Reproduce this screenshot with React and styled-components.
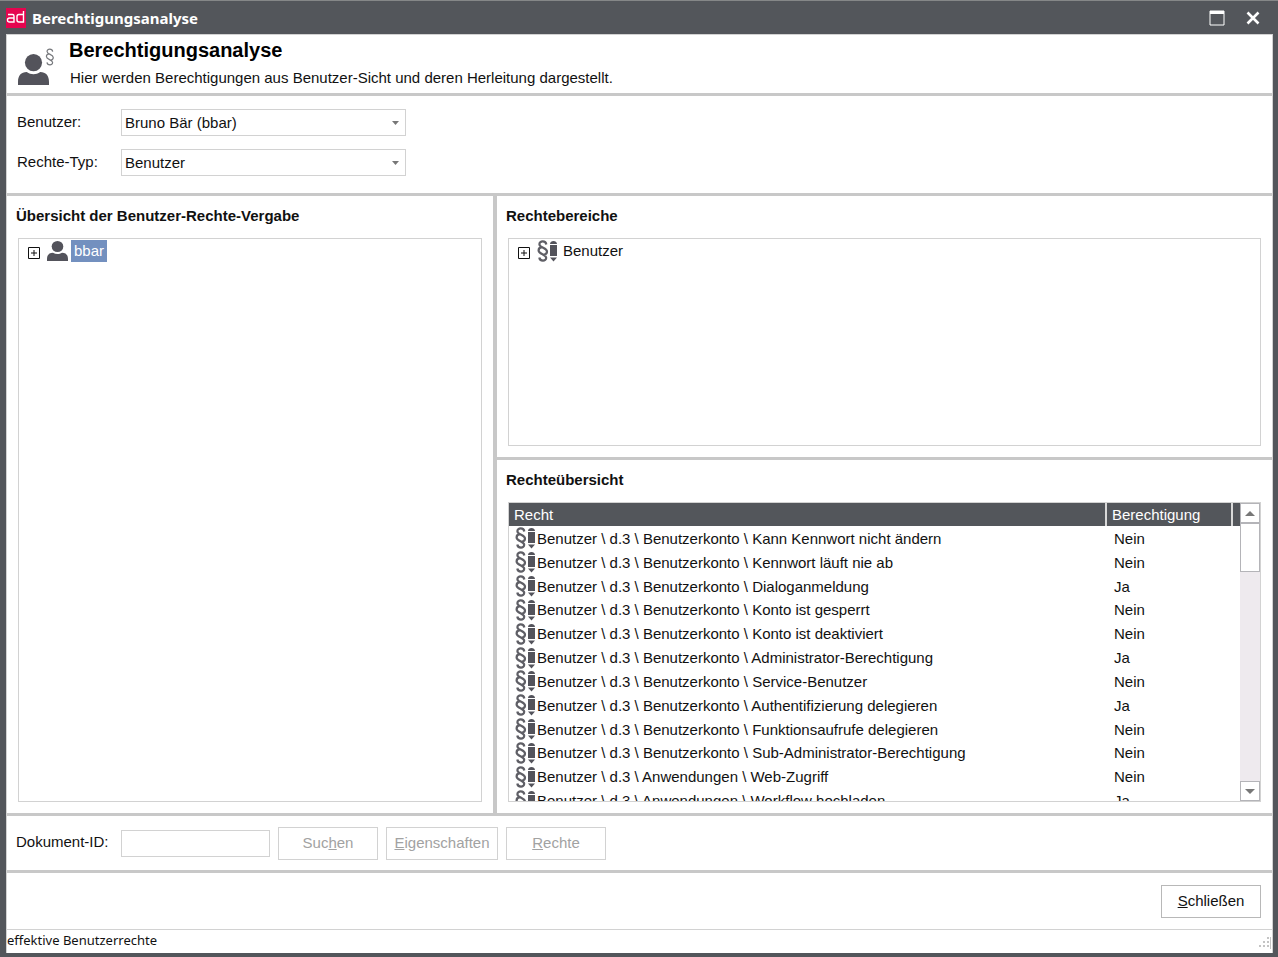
import React from 'react';
import styled, { createGlobalStyle } from 'styled-components';

const frame = '#53565b';
const line = '#c8c8c8';
const boxLine = '#d2d2d2';

const GlobalStyle = createGlobalStyle`
  *, *::before, *::after { box-sizing: border-box; }
  body { margin: 0; background: ${frame}; }
  body, button, input, select, table {
    font-family: "Liberation Sans", Arial, sans-serif;
    font-size: 15px;
    color: #111;
  }
`;

const Window = styled.div`
  display: flex;
  flex-direction: column;
  height: 100vh;
  min-height: 640px;
  padding: 0 5px 4px 6px;
  background: ${frame};
  border-top: 1px solid #858788;
`;

const TitleBar = styled.header`
  display: flex;
  align-items: center;
  flex: none;
  height: 33px;
  padding-right: 8px;
`;

const AppLogo = styled.svg`
  width: 20px;
  height: 20px;
`;

const WindowTitle = styled.div`
  flex: 1;
  padding-left: 6px;
  font-family: "Noto Sans", "Open Sans", sans-serif;
  font-size: 15px;
  font-weight: 700;
  color: #fff;
`;

const WindowButton = styled.button`
  display: flex;
  align-items: center;
  justify-content: center;
  width: 24px;
  height: 24px;
  margin-left: 12px;
  padding: 0;
  border: 0;
  background: none;
`;

const Body = styled.main`
  display: flex;
  flex-direction: column;
  flex: 1;
  min-height: 0;
  background: #fff;
  border: 1px solid ${boxLine};
  border-bottom: 0;
`;

const Intro = styled.section`
  display: flex;
  flex: none;
  height: 61px;
  border-bottom: 3px solid ${line};
`;

const IntroIcon = styled.svg`
  width: 40px;
  height: 42px;
  margin: 9px 11px 0 11px;
`;

const Heading = styled.h1`
  margin: 0;
  font-size: 20px;
  line-height: 30px;
  color: #000;
`;

const Description = styled.p`
  margin: 0;
  padding-left: 1px;
  line-height: 26px;
`;

const Filters = styled.form`
  display: grid;
  grid-template-columns: 104px 285px;
  grid-auto-rows: 27px;
  row-gap: 13px;
  flex: none;
  height: 100px;
  padding: 13px 0 0 10px;
  border-bottom: 3px solid ${line};
`;

const Label = styled.label`
  line-height: 25px;
  white-space: nowrap;
`;

const SelectWrap = styled.div`
  position: relative;
  display: flex;
`;

const Select = styled.select`
  width: 100%;
  appearance: none;
  padding: 0 20px 0 3px;
  border: 1px solid ${boxLine};
  border-radius: 0;
  background: #fff;
`;

const SelectArrow = styled.svg`
  position: absolute;
  top: 12px;
  right: 7px;
  width: 7px;
  height: 4px;
  pointer-events: none;
`;

const Columns = styled.div`
  display: grid;
  grid-template-columns: minmax(0, 486fr) minmax(0, 779fr);
  flex: 1;
  min-height: 0;
`;

const RightColumn = styled.div`
  display: grid;
  grid-template-rows: minmax(0, 264fr) minmax(0, 353fr);
  min-height: 0;
  border-left: 4px solid ${line};
`;

const Panel = styled.section`
  display: flex;
  flex-direction: column;
  min-height: 0;
  padding: 0 11px 11px 9px;
  border-bottom: ${(p) => (p.$divided ? `3px solid ${line}` : '0')};
`;

const PanelTitle = styled.h2`
  flex: none;
  margin: 0 0 3px;
  font-size: 15px;
  line-height: 39px;
  white-space: nowrap;
`;

const Well = styled.div`
  display: flex;
  flex: 1;
  min-height: 0;
  margin-left: 2px;
  border: 1px solid ${boxLine};
  overflow: hidden;
`;

const TreeItem = styled.div`
  display: flex;
  align-items: center;
  height: 23px;
  padding-left: 9px;
`;

const Expander = styled.button`
  width: 12px;
  height: 12px;
  margin: 4px 7px 0 0;
  padding: 0;
  border: 0;
  background: none;

  svg { display: block; }
`;

const NodeLabel = styled.span`
  margin-left: 3px;
  padding: 0 3px;
  line-height: 22px;
  color: ${(p) => (p.$selected ? '#fff' : '#111')};
  background: ${(p) => (p.$selected ? '#7390bf' : 'transparent')};
`;

const TableArea = styled.div`
  flex: 1;
  min-width: 0;
  overflow: hidden;
`;

const Table = styled.table`
  width: 100%;
  height: 309px;
  table-layout: fixed;
  border-collapse: separate;
  border-spacing: 0;

  td { padding: 1px 0 0; }
`;

const HeadCell = styled.th`
  width: ${(p) => p.$width || 'auto'};
  height: 23px;
  padding: 1px 0 0 5px;
  border-right: ${(p) => (p.$last ? '0' : '2px solid #d8d8d8')};
  background: ${frame};
  font-weight: 400;
  line-height: 22px;
  text-align: left;
  color: #fff;
`;

const RightName = styled.div`
  display: flex;
  align-items: center;
  gap: 2px;
  height: 22px;
  padding-left: 6px;
  white-space: nowrap;
`;

const Value = styled.td`
  && { padding-left: 7px; }
`;

const ScrollTrack = styled.div`
  display: flex;
  flex-direction: column;
  justify-content: space-between;
  width: 20px;
  background: #eeeaee;
`;

const ScrollButton = styled.button`
  display: flex;
  align-items: center;
  justify-content: center;
  width: 20px;
  height: 20px;
  padding: 0;
  border: 1px solid #b4b4b8;
  background: #fff;
`;

const Thumb = styled.div`
  height: 49px;
  border: 1px solid #b4b4b8;
  background: #fff;
`;

const DocumentBar = styled.form`
  display: flex;
  align-items: center;
  flex: none;
  height: 60px;
  padding-left: 9px;
  border: solid ${line};
  border-width: 3px 0;
`;

const DocumentLabel = styled(Label)`
  width: 105px;
  padding-bottom: 3px;
`;

const DocumentInput = styled.input`
  width: 149px;
  height: 27px;
  margin-right: 8px;
  padding: 0 4px;
  border: 1px solid ${boxLine};
`;

const Button = styled.button`
  width: ${(p) => (p.$wide ? '112px' : '100px')};
  height: 33px;
  margin-right: 8px;
  padding: 0 0 2px;
  border: 1px solid #b8b8b8;
  background: #fff;

  &:disabled {
    border-color: ${boxLine};
    color: #a2a2a2;
  }
`;

const Mnemonic = styled.span`
  text-decoration: underline;
`;

const Actions = styled.div`
  display: flex;
  align-items: center;
  justify-content: flex-end;
  flex: none;
  height: 57px;
  padding-right: 3px;
  border-bottom: 1px solid ${boxLine};
`;

const StatusBar = styled.footer`
  display: flex;
  align-items: center;
  justify-content: space-between;
  flex: none;
  height: 23px;
  padding-bottom: 3px;
  font-family: "Noto Sans", "Open Sans", sans-serif;
  font-size: 13px;
`;

const Grip = styled.svg`
  align-self: flex-end;
  width: 14px;
  height: 14px;
`;

const icon = '#53535b';

function PersonShape() {
  return (
    <g fill={icon}>
      <circle cx="15" cy="8.3" r="8.3" />
      <path d="M0 30v-3c0-6 3-9.500 8.500-9.500 4 2.800 9 2.800 13 0 5.500 0 8.500 3.500 8.500 9.500v3z" />
    </g>
  );
}

function PersonIcon() {
  return (
    <svg width="21" height="20" viewBox="0 0 30 30" preserveAspectRatio="none" aria-hidden="true">
      <PersonShape />
    </svg>
  );
}

function SectionSign({ color, weight }) {
  return (
    <path
      d="M9.300 4.500C8.800.5 2.400.5 2.400 4.200c0 3.600 7.600 3.600 7.600 7.400 0 2-1.500 3-3.400 3.200M2.300 17.500c.5 4 6.900 4 6.900.3 0-3.600-7.600-3.600-7.600-7.400 0-2 1.500-3 3.400-3.200"
      fill="none"
      stroke={color}
      strokeWidth={weight}
    />
  );
}

function RightIcon() {
  return (
    <svg width="20" height="22" viewBox="0 0 20 22" aria-hidden="true">
      <SectionSign color="#5f5f66" weight="2.200" />
      <path d="M13 4c0-4 7-4 7 0z M13 5h7v11h-7z M13 17.500h7l-3.500 4z" fill={icon} />
    </svg>
  );
}

function ExpandButton({ label }) {
  return (
    <Expander type="button" aria-label={label}>
      <svg width="12" height="12" viewBox="0 0 12 12" fill="none" stroke="#111">
        <path d="M.5.5h11v11H.5zM3 6h6M6 3v6" />
      </svg>
    </Expander>
  );
}

function Dropdown({ id, value }) {
  return (
    <SelectWrap>
      <Select id={id} defaultValue={value}>
        <option>{value}</option>
      </Select>
      <SelectArrow viewBox="0 0 7 4" aria-hidden="true">
        <path d="M0 0h7L3.500 4z" fill="#777" />
      </SelectArrow>
    </SelectWrap>
  );
}

const rights = [
  ['Benutzerkonto', 'Kann Kennwort nicht ändern', 'Nein'],
  ['Benutzerkonto', 'Kennwort läuft nie ab', 'Nein'],
  ['Benutzerkonto', 'Dialoganmeldung', 'Ja'],
  ['Benutzerkonto', 'Konto ist gesperrt', 'Nein'],
  ['Benutzerkonto', 'Konto ist deaktiviert', 'Nein'],
  ['Benutzerkonto', 'Administrator-Berechtigung', 'Ja'],
  ['Benutzerkonto', 'Service-Benutzer', 'Nein'],
  ['Benutzerkonto', 'Authentifizierung delegieren', 'Ja'],
  ['Benutzerkonto', 'Funktionsaufrufe delegieren', 'Nein'],
  ['Benutzerkonto', 'Sub-Administrator-Berechtigung', 'Nein'],
  ['Anwendungen', 'Web-Zugriff', 'Nein'],
  ['Anwendungen', 'Workflow hochladen', 'Ja'],
];

export default function App() {
  return (
    <>
      <GlobalStyle />
      <Window>
        <TitleBar>
          <AppLogo viewBox="0 0 20 20" aria-hidden="true">
            <path d="M0 0h20v20H0z" fill="#e5054f" />
            <path
              d="M2 6.500h4.500q1.500 0 1.500 1.500v6H3.500Q1.500 14 1.500 12t2-2H8M17.500 3v11H13q-2 0-2-2V8.500q0-2 2-2h4.500"
              fill="none"
              stroke="#fff"
              strokeWidth="1.400"
            />
          </AppLogo>
          <WindowTitle>Berechtigungsanalyse</WindowTitle>
          <WindowButton type="button" aria-label="Maximieren">
            <svg width="16" height="16" viewBox="0 0 16 16">
              <path d="M1 1h14v14H1z" fill="none" stroke="#fff" />
              <path d="M1 1h14v3H1z" fill="#fff" />
            </svg>
          </WindowButton>
          <WindowButton type="button" aria-label="Fenster schließen">
            <svg width="14" height="14" viewBox="0 0 14 14">
              <path d="M1.500 1.500l11 11M12.500 1.500l-11 11" stroke="#fff" strokeWidth="2.600" />
            </svg>
          </WindowButton>
        </TitleBar>

        <Body>
          <Intro>
            <IntroIcon viewBox="0 0 40 42" aria-hidden="true">
              <svg x="0" y="10" width="31" height="31" viewBox="0 0 30 30">
                <PersonShape />
              </svg>
              <svg x="27" y="4" width="10" height="18" viewBox="0 0 12 22">
                <SectionSign color="#77797d" weight="1.500" />
              </svg>
            </IntroIcon>
            <div>
              <Heading>Berechtigungsanalyse</Heading>
              <Description>
                Hier werden Berechtigungen aus Benutzer-Sicht und deren Herleitung dargestellt.
              </Description>
            </div>
          </Intro>

          <Filters>
            <Label htmlFor="user">Benutzer:</Label>
            <Dropdown id="user" value="Bruno Bär (bbar)" />
            <Label htmlFor="type">Rechte-Typ:</Label>
            <Dropdown id="type" value="Benutzer" />
          </Filters>

          <Columns>
            <Panel>
              <PanelTitle>Übersicht der Benutzer-Rechte-Vergabe</PanelTitle>
              <Well>
                <TreeItem>
                  <ExpandButton label="bbar aufklappen" />
                  <PersonIcon />
                  <NodeLabel $selected>bbar</NodeLabel>
                </TreeItem>
              </Well>
            </Panel>

            <RightColumn>
              <Panel $divided>
                <PanelTitle>Rechtebereiche</PanelTitle>
                <Well>
                  <TreeItem>
                    <ExpandButton label="Benutzer aufklappen" />
                    <RightIcon />
                    <NodeLabel>Benutzer</NodeLabel>
                  </TreeItem>
                </Well>
              </Panel>

              <Panel>
                <PanelTitle>Rechteübersicht</PanelTitle>
                <Well>
                  <TableArea>
                    <Table>
                      <thead>
                        <tr>
                          <HeadCell>Recht</HeadCell>
                          <HeadCell $width="126px">Berechtigung</HeadCell>
                          <HeadCell $width="7px" $last aria-hidden="true" />
                        </tr>
                      </thead>
                      <tbody>
                        {rights.map(([group, name, value]) => (
                          <tr key={name}>
                            <td>
                              <RightName>
                                <RightIcon />
                                {`Benutzer \\ d.3 \\ ${group} \\ ${name}`}
                              </RightName>
                            </td>
                            <Value colSpan={2}>{value}</Value>
                          </tr>
                        ))}
                      </tbody>
                    </Table>
                  </TableArea>
                  <ScrollTrack>
                    <div>
                      <ScrollButton type="button" aria-label="Nach oben">
                        <svg width="10" height="5" viewBox="0 0 10 5">
                          <path d="M0 5l5-5 5 5z" fill="#777" />
                        </svg>
                      </ScrollButton>
                      <Thumb />
                    </div>
                    <ScrollButton type="button" aria-label="Nach unten">
                      <svg width="10" height="5" viewBox="0 0 10 5">
                        <path d="M0 0l5 5 5-5z" fill="#777" />
                      </svg>
                    </ScrollButton>
                  </ScrollTrack>
                </Well>
              </Panel>
            </RightColumn>
          </Columns>

          <DocumentBar>
            <DocumentLabel htmlFor="document">Dokument-ID:</DocumentLabel>
            <DocumentInput id="document" type="text" />
            <Button type="button" disabled>Suc<Mnemonic>h</Mnemonic>en</Button>
            <Button type="button" $wide disabled><Mnemonic>E</Mnemonic>igenschaften</Button>
            <Button type="button" disabled><Mnemonic>R</Mnemonic>echte</Button>
          </DocumentBar>

          <Actions>
            <Button type="button"><Mnemonic>S</Mnemonic>chließen</Button>
          </Actions>

          <StatusBar>
            effektive Benutzerrechte
            <Grip viewBox="0 0 14 14" aria-hidden="true">
              <path
                d="M9 1h2v2H9zM5 5h2v2H5zM9 5h2v2H9zM1 9h2v2H1zM5 9h2v2H5zM9 9h2v2H9zM12 1h1v12h-1z"
                fill="#c4c4c4"
              />
            </Grip>
          </StatusBar>
        </Body>
      </Window>
    </>
  );
}
